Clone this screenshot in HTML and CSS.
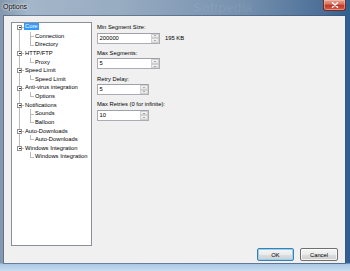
FILE: index.html
```html
<!DOCTYPE html>
<html>
<head>
<meta charset="utf-8">
<link rel="stylesheet" href="styles.css">
</head>
<body>
<div class="window">
  <div class="titlebar">
    <span class="title">Options</span>
    <span class="wm">Softpedia</span>
    <button class="close"><svg width="8" height="6" viewBox="0 0 8 6"><path d="M1.5 0.8 L6.5 5.2 M6.5 0.8 L1.5 5.2" stroke="#fff" stroke-width="1.5" stroke-linecap="round"/></svg></button>
  </div>
  <div class="client">
    <div class="main">
      <div class="tree">
        <div class="node first">
          <div class="row root"><span class="exp"></span><span class="sel">Core</span></div>
          <div class="kids"><div class="row kid">Connection</div><div class="row kid last">Directory</div></div>
        </div>
        <div class="node">
          <div class="row root"><span class="exp"></span>HTTP/FTP</div>
          <div class="kids"><div class="row kid last">Proxy</div></div>
        </div>
        <div class="node">
          <div class="row root"><span class="exp"></span>Speed Limit</div>
          <div class="kids"><div class="row kid last">Speed Limit</div></div>
        </div>
        <div class="node">
          <div class="row root"><span class="exp"></span>Anti-virus integration</div>
          <div class="kids"><div class="row kid last">Options</div></div>
        </div>
        <div class="node">
          <div class="row root"><span class="exp"></span>Notifications</div>
          <div class="kids"><div class="row kid">Sounds</div><div class="row kid last">Balloon</div></div>
        </div>
        <div class="node">
          <div class="row root"><span class="exp"></span>Auto-Downloads</div>
          <div class="kids"><div class="row kid last">Auto-Downloads</div></div>
        </div>
        <div class="node last">
          <div class="row root"><span class="exp"></span>Windows Integration</div>
          <div class="kids"><div class="row kid last">Windows Integration</div></div>
        </div>
      </div>
      <div class="panel">
        <div class="field">
          <div class="lbl">Min Segment Size:</div>
          <div class="inrow">
            <div class="spin"><span class="val">200000</span><span class="arrows"><span class="up"></span><span class="down"></span></span></div>
            <span class="unit">195 KB</span>
          </div>
        </div>
        <div class="field">
          <div class="lbl">Max Segments:</div>
          <div class="inrow">
            <div class="spin"><span class="val">5</span><span class="arrows"><span class="up"></span><span class="down"></span></span></div>
          </div>
        </div>
        <div class="field">
          <div class="lbl">Retry Delay:</div>
          <div class="inrow">
            <div class="spin narrow"><span class="val">5</span><span class="arrows"><span class="up"></span><span class="down"></span></span></div>
          </div>
        </div>
        <div class="field">
          <div class="lbl">Max Retries (0 for infinite):</div>
          <div class="inrow">
            <div class="spin narrow"><span class="val">10</span><span class="arrows"><span class="up"></span><span class="down"></span></span></div>
          </div>
        </div>
      </div>
    </div>
    <div class="buttons">
      <button class="btn default">OK</button>
      <button class="btn">Cancel</button>
    </div>
  </div>
</div>
</body>
</html>
```
FILE: styles.css
```css
html, body {
  margin: 0;
  padding: 0;
}
body {
  width: 350px;
  height: 271px;
  overflow: hidden;
  font-family: "Liberation Sans", Arial, sans-serif;
}
.window {
  --rh: 8.63px;
  width: 350px;
  height: 271px;
  box-sizing: border-box;
  display: flex;
  flex-direction: column;
  background:
    linear-gradient(to top, #c9def0 0, #a9c7e3 7px, transparent 8px),
    linear-gradient(to right, #8297ae 0, #a4b6c9 8%, #97abc1 35%, #7590ae 70%, #4d7098 92%, #2f5f90 100%);
  padding: 0 5px 8px 4px;
}
.titlebar {
  height: 16px;
  display: flex;
  align-items: flex-start;
  justify-content: space-between;
  position: relative;
  margin-left: -1px;
}
.title {
  font-size: 7px;
  line-height: 14px;
  color: #000;
  text-shadow: 0 0 3px #fff, 0 0 2px #fff;
}
.wm {
  position: absolute;
  left: 190px;
  top: 0;
  font-size: 13px;
  line-height: 15px;
  color: rgba(255, 255, 255, 0.06);
  font-weight: bold;
}
.close {
  width: 23px;
  height: 11px;
  margin: 0 -1px 0 0;
  padding: 0;
  border: 1px solid #6a2e27;
  border-top: none;
  border-radius: 0 0 3px 3px;
  background: linear-gradient(#e8a493 0, #d3735f 40%, #c0392a 55%, #d45d45 100%);
  display: flex;
  align-items: center;
  justify-content: center;
  box-shadow: inset 0 0 0 1px rgba(255, 200, 190, 0.5);
}
.close svg {
  display: block;
}
.client {
  flex: 1;
  background: #f0f0f0;
  box-shadow: 0 0 0 1px rgba(60, 80, 110, 0.55);
  display: flex;
  flex-direction: column;
  font-size: 5.8px;
  color: #000;
}
.main {
  flex: 1;
  display: flex;
  padding: 6px 0 0 7px;
}
.tree {
  width: 81px;
  height: 224px;
  box-sizing: border-box;
  border: 1px solid #8a8f98;
  background: #fff;
}
.node {
  position: relative;
}
.node::before {
  content: "";
  position: absolute;
  left: 7px;
  top: 0;
  bottom: 0;
  border-left: 1px solid #bcbcbc;
}
.node.first::before {
  top: calc(var(--rh) / 2);
}
.node.last::before {
  bottom: auto;
  height: calc(var(--rh) / 2);
}
.row {
  height: var(--rh);
  line-height: var(--rh);
  white-space: nowrap;
  position: relative;
}
.root {
  padding-left: 13px;
}
.root::after {
  content: "";
  position: absolute;
  left: 8px;
  width: 4px;
  top: 50%;
  border-top: 1px solid #bcbcbc;
}
.exp {
  position: absolute;
  left: 5px;
  top: calc(50% - 2px);
  width: 5px;
  height: 5px;
  box-sizing: border-box;
  border: 1px solid #909090;
  background: #fff;
  z-index: 1;
}
.exp::after {
  content: "";
  position: absolute;
  left: 0.5px;
  right: 0.5px;
  top: 1px;
  height: 1px;
  background: #333;
}
.sel {
  display: inline-block;
  background: #3399ff;
  color: #fff;
  line-height: 7px;
  padding: 0 1px;
  margin-left: -1px;
  vertical-align: middle;
  position: relative;
  top: -0.5px;
}
.kid {
  padding-left: 23px;
}
.kid::before {
  content: "";
  position: absolute;
  left: 18px;
  width: 4px;
  top: 50%;
  border-top: 1px solid #bcbcbc;
}
.kid::after {
  content: "";
  position: absolute;
  left: 18px;
  top: 0;
  bottom: 0;
  border-left: 1px solid #bcbcbc;
}
.kid.last::after {
  bottom: auto;
  height: 50%;
}
.panel {
  margin-left: 5px;
  padding-top: 1.3px;
  display: flex;
  flex-direction: column;
}
.field {
  margin-bottom: 5.3px;
}
.lbl {
  height: 8px;
  line-height: 8px;
  margin-bottom: 1.4px;
  white-space: nowrap;
}
.inrow {
  display: flex;
  align-items: center;
  gap: 5px;
}
.spin {
  width: 63px;
  height: 11px;
  box-sizing: border-box;
  border: 1px solid #abadb3;
  border-top-color: #9ea1a8;
  background: #fff;
  display: flex;
}
.spin.narrow {
  width: 52px;
}
.val {
  flex: 1;
  padding-left: 1.5px;
  line-height: 9px;
}
.arrows {
  width: 8px;
  display: flex;
  flex-direction: column;
}
.arrows span {
  flex: 1;
  box-sizing: border-box;
  border: 1px solid #d0d0d0;
  background: linear-gradient(#f5f5f5, #e2e2e2);
  display: flex;
  align-items: center;
  justify-content: center;
}
.arrows .up::after {
  content: "";
  border-left: 1.5px solid transparent;
  border-right: 1.5px solid transparent;
  border-bottom: 1.5px solid #6a6a6a;
}
.arrows .down::after {
  content: "";
  border-left: 1.5px solid transparent;
  border-right: 1.5px solid transparent;
  border-top: 1.5px solid #6a6a6a;
}
.unit {
  line-height: 9px;
}
.buttons {
  display: flex;
  justify-content: flex-end;
  gap: 6px;
  padding: 2px 7px 2px 0;
}
.btn {
  height: 13px;
  width: 38px;
  padding: 0;
  font-family: "Liberation Sans", Arial, sans-serif;
  font-size: 5.8px;
  color: #000;
  border: 1px solid #707070;
  border-radius: 2px;
  background: linear-gradient(#f6f6f6 0, #ebebeb 50%, #dddddd 51%, #cfcfcf 100%);
  box-shadow: inset 0 0 0 1px rgba(255, 255, 255, 0.7);
}
.btn.default {
  width: 37px;
  border-color: #3c7fb1;
  box-shadow: inset 0 0 0 1px #91d2f5;
}
```
